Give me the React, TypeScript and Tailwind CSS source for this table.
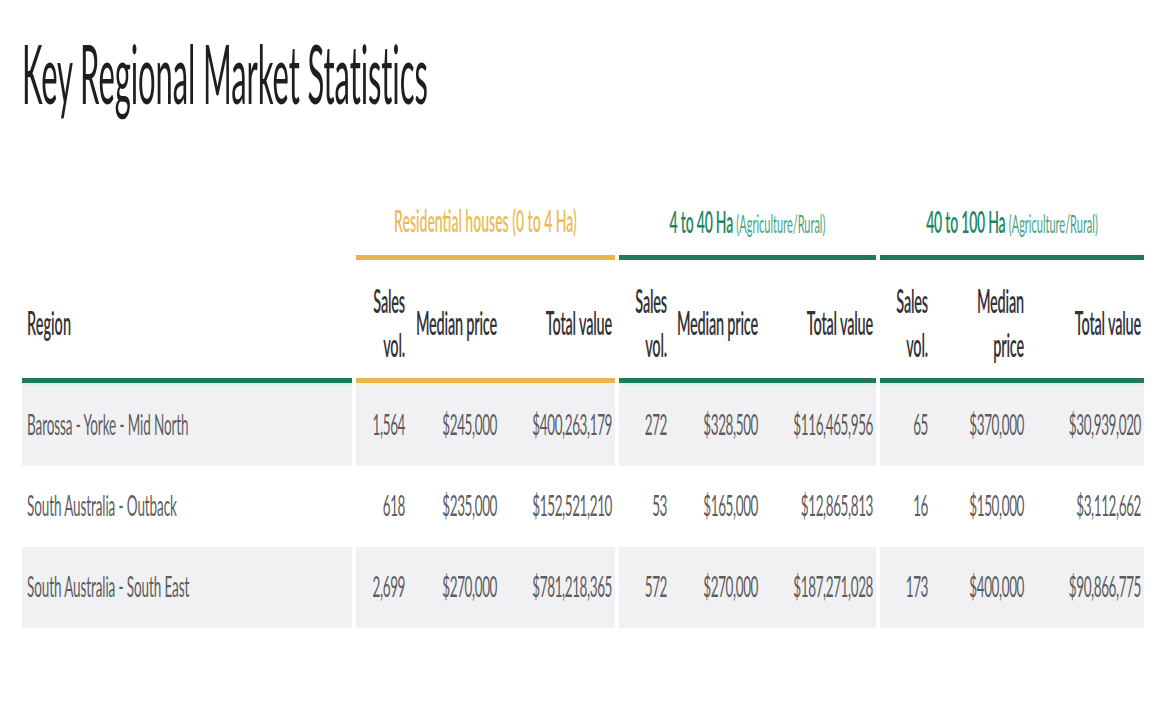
import React from "react";

const rows = [
  {
    region: "Barossa - Yorke - Mid North",
    v: ["1,564", "$245,000", "$400,263,179", "272", "$328,500", "$116,465,956", "65", "$370,000", "$30,939,020"],
    bg: true,
  },
  {
    region: "South Australia - Outback",
    v: ["618", "$235,000", "$152,521,210", "53", "$165,000", "$12,865,813", "16", "$150,000", "$3,112,662"],
    bg: false,
  },
  {
    region: "South Australia - South East",
    v: ["2,699", "$270,000", "$781,218,365", "572", "$270,000", "$187,271,028", "173", "$400,000", "$90,866,775"],
    bg: true,
  },
];

const groupCols = [
  "grid grid-cols-[52px_92px_115px] h-full",
  "grid grid-cols-[51px_91px_115px] h-full",
  "grid grid-cols-[51px_96px_117px] h-full",
];

function Tall({ children, className = "" }: { children: React.ReactNode; className?: string }) {
  return <span className={"inline-block scale-y-[2.2] " + className}>{children}</span>;
}

function HeadCell({ children }: { children: React.ReactNode }) {
  return (
    <div className="flex items-center justify-end pr-[3px] pt-[10px]">
      <Tall className="text-right leading-[20px]">{children}</Tall>
    </div>
  );
}

export default function App() {
  return (
    <div className="w-[1160px] h-[704px] bg-white overflow-hidden font-['Lato','Open_Sans',sans-serif]">
      <div className="h-[148px] flex items-center pl-[22px]">
        <h1 className="inline-block scale-y-[2.6] text-[31px] leading-none font-normal text-[#1e1e1e] tracking-[-0.1px]">
          Key Regional Market Statistics
        </h1>
      </div>

      <div className="ml-[22px] w-[1122px] grid grid-cols-[330px_259px_257px_264px] gap-x-1">
        {/* group titles */}
        <div className="h-[107px]" />
        <div className="h-[107px] flex items-end justify-center pb-[27px]">
          <Tall className="text-[14px] leading-none font-semibold text-[#eabb57]">
            Residential houses (0 to 4 Ha)
          </Tall>
        </div>
        <div className="h-[107px] flex items-end justify-center pb-[27px]">
          <Tall className="leading-none whitespace-nowrap">
            <span className="text-[14px] font-semibold text-[#1e8660] tracking-[-0.2px]">4 to 40 Ha </span>
            <span className="text-[11px] text-[#46a47f]">(Agriculture/Rural)</span>
          </Tall>
        </div>
        <div className="h-[107px] flex items-end justify-center pb-[27px]">
          <Tall className="leading-none whitespace-nowrap">
            <span className="text-[14px] font-semibold text-[#1e8660] tracking-[-0.2px]">40 to 100 Ha </span>
            <span className="text-[11px] text-[#46a47f]">(Agriculture/Rural)</span>
          </Tall>
        </div>

        {/* group lines */}
        <div className="h-[5px]" />
        <div className="h-[5px] bg-[#e8b44c]" />
        <div className="h-[5px] bg-[#1f7a58]" />
        <div className="h-[5px] bg-[#1f7a58]" />

        {/* column headers */}
        <div className="h-[118px] flex items-center pl-[5px] pt-[10px] text-[14.5px] font-semibold text-[#333336]">
          <Tall className="leading-[20px]">Region</Tall>
        </div>
        {[0, 1, 2].map((g) => (
          <div key={g} className="h-[118px] text-[14.5px] font-semibold text-[#333336] tracking-[-0.2px]">
            <div className={groupCols[g]}>
              <HeadCell>
                Sales
                <br />
                vol.
              </HeadCell>
              {g === 2 ? (
                <HeadCell>
                  Median
                  <br />
                  price
                </HeadCell>
              ) : (
                <HeadCell>Median price</HeadCell>
              )}
              <HeadCell>Total value</HeadCell>
            </div>
          </div>
        ))}

        {/* header bottom lines */}
        <div className="h-[7px] border-t-[5px] border-[#1f7a58] bg-[#d8f3e8]" />
        <div className="h-[7px] border-t-[5px] border-[#e8b44c] bg-[#fbefd3]" />
        <div className="h-[7px] border-t-[5px] border-[#1f7a58] bg-[#d8f3e8]" />
        <div className="h-[7px] border-t-[5px] border-[#1f7a58] bg-[#d8f3e8]" />

        {/* data rows */}
        {rows.map((r, ri) => (
          <React.Fragment key={ri}>
            <div
              className={
                "h-[81px] flex items-center pl-[5px] text-[13.5px] text-[#5c5c60] " +
                (r.bg ? "bg-[#f1f1f3]" : "bg-white")
              }
            >
              <Tall className="leading-none whitespace-nowrap tracking-[-0.1px]">{r.region}</Tall>
            </div>
            {[0, 1, 2].map((g) => (
              <div
                key={g}
                className={"h-[81px] text-[13.5px] text-[#5c5c60] " + (r.bg ? "bg-[#f1f1f3]" : "bg-white")}
              >
                <div className={groupCols[g]}>
                  {[0, 1, 2].map((c) => (
                    <div key={c} className="flex items-center justify-end pr-[3px]">
                      <Tall className="leading-none whitespace-nowrap tracking-[-0.4px]">{r.v[g * 3 + c]}</Tall>
                    </div>
                  ))}
                </div>
              </div>
            ))}
          </React.Fragment>
        ))}
      </div>
    </div>
  );
}
